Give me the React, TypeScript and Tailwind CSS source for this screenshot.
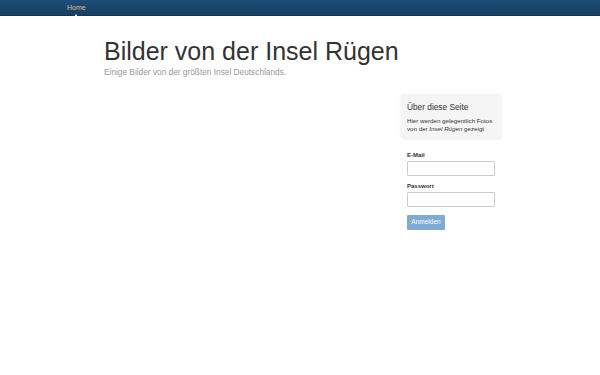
import React from 'react';

const App: React.FC = () => {
  return (
    <div className="min-h-[375px] w-full bg-white font-['Liberation_Sans',Arial,sans-serif] text-[#333]">
      {/* Navbar */}
      <nav className="h-[16px] w-full bg-gradient-to-b from-[#1d4d78] to-[#173f63] border-b border-[#123350]">
        <div className="mx-auto w-[466px] h-full flex items-center">
          <a className="relative text-[7px] leading-none text-[#e6b97c] pb-[1px]">
            Home
            <span className="absolute left-1/2 -translate-x-1/2 top-[10px] w-0 h-0 border-l-[2px] border-r-[2px] border-b-[3px] border-l-transparent border-r-transparent border-b-white" />
          </a>
        </div>
      </nav>

      <div className="mx-auto w-[406px] px-[7px]">
        {/* Header */}
        <div className="pt-[20px]">
          <h1 className="text-[25px] leading-[30px] font-normal text-[#333]">Bilder von der Insel Rügen</h1>
          <p className="text-[8.3px] leading-[10px] text-[#999] mt-[1px]">Einige Bilder von der größten Insel Deutschlands.</p>
        </div>

        {/* Body */}
        <div className="flex justify-between mt-[17px]">
          <div className="flex-1" />
          <aside className="w-[100px] -mr-[5px]">
            <div className="bg-[#f5f5f5] rounded-[2px] shadow-[0_1px_3px_rgba(0,0,0,0.08)] pl-[6px] pr-[2px] pt-[8px] pb-[5px]">
              <h4 className="text-[8.3px] leading-[10px] text-[#333] mb-[5px]">Über diese Seite</h4>
              <p className="text-[6.2px] leading-[8px] text-[#333] whitespace-nowrap">
                Hier werden gelegentlich Fotos
                <br />
                von der <em>Insel Rügen</em> gezeigt
              </p>
            </div>

            <form className="mt-[13px] px-[6px]">
              <label className="block text-[6px] font-bold leading-[8px] mb-[2px]">E-Mail</label>
              <input className="block w-[88px] h-[15px] border border-[#ccc] rounded-[1px] bg-white" />
              <label className="block text-[6px] font-bold leading-[8px] mt-[6px] mb-[2px]">Passwort</label>
              <input type="password" className="block w-[88px] h-[15px] border border-[#ccc] rounded-[1px] bg-white" />
              <button type="button" className="mt-[5px] h-[15px] w-[38px] rounded-[1px] bg-[#7eaad4] text-white text-[6.5px] leading-none">
                Anmelden
              </button>
            </form>
          </aside>
        </div>
      </div>
    </div>
  );
};

export default App;
